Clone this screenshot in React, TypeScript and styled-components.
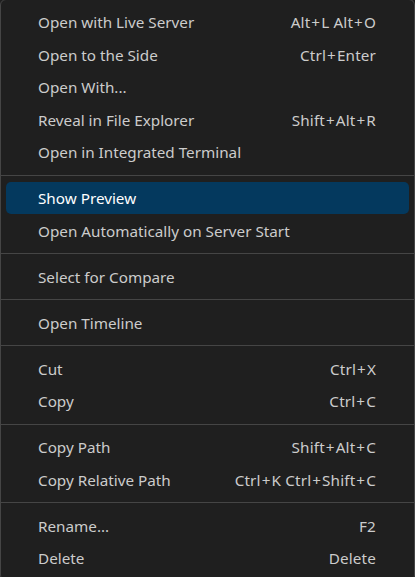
import React from "react";
import styled, { createGlobalStyle } from "styled-components";

const Global = createGlobalStyle`
  html, body { margin: 0; padding: 0; background: #1f1f1f; }
  body { width: 415px; height: 577px; overflow: hidden; }
`;

const Menu = styled.div`
  box-sizing: border-box;
  width: 415px;
  margin-top: -1px;
  padding: 5.75px 0 6px;
  background: #1f1f1f;
  border: 1px solid #454545;
  border-radius: 6px;
  font-family: "Noto Sans", "Open Sans", sans-serif;
  font-size: 15.25px;
  color: #cccccc;
  display: flex;
  flex-direction: column;
`;

const Item = styled.div<{ $active?: boolean }>`
  height: 32.5px;
  margin: 0 5px;
  padding: 0 32px 0 32px;
  display: flex;
  align-items: center;
  justify-content: space-between;
  border-radius: 5px;
  background: ${(p) => (p.$active ? "#04395e" : "transparent")};
  color: ${(p) => (p.$active ? "#ffffff" : "#cccccc")};
  white-space: nowrap;
`;

const Label = styled.span``;
const Keys = styled.span`
  padding-right: 1px;
  letter-spacing: 0.15px;
`;
const Plus = styled.span`
  margin: 0 1px;
`;

const Separator = styled.div`
  height: 1px;
  margin: 6.25px 0;
  background: #454545;
`;

type Entry = { label: string; keys?: string; active?: boolean } | "sep";

const entries: Entry[] = [
  { label: "Open with Live Server", keys: "Alt+L Alt+O" },
  { label: "Open to the Side", keys: "Ctrl+Enter" },
  { label: "Open With..." },
  { label: "Reveal in File Explorer", keys: "Shift+Alt+R" },
  { label: "Open in Integrated Terminal" },
  "sep",
  { label: "Show Preview", active: true },
  { label: "Open Automatically on Server Start" },
  "sep",
  { label: "Select for Compare" },
  "sep",
  { label: "Open Timeline" },
  "sep",
  { label: "Cut", keys: "Ctrl+X" },
  { label: "Copy", keys: "Ctrl+C" },
  "sep",
  { label: "Copy Path", keys: "Shift+Alt+C" },
  { label: "Copy Relative Path", keys: "Ctrl+K Ctrl+Shift+C" },
  "sep",
  { label: "Rename...", keys: "F2" },
  { label: "Delete", keys: "Delete" },
];

function renderKeys(keys: string) {
  const parts = keys.split("+");
  return parts.map((p, i) => (
    <React.Fragment key={i}>
      {i > 0 && <Plus>+</Plus>}
      {p}
    </React.Fragment>
  ));
}

export default function App() {
  return (
    <>
      <Global />
      <Menu>
        {entries.map((e, i) =>
          e === "sep" ? (
            <Separator key={i} />
          ) : (
            <Item key={i} $active={e.active}>
              <Label>{e.label}</Label>
              {e.keys && <Keys>{renderKeys(e.keys)}</Keys>}
            </Item>
          )
        )}
      </Menu>
    </>
  );
}
